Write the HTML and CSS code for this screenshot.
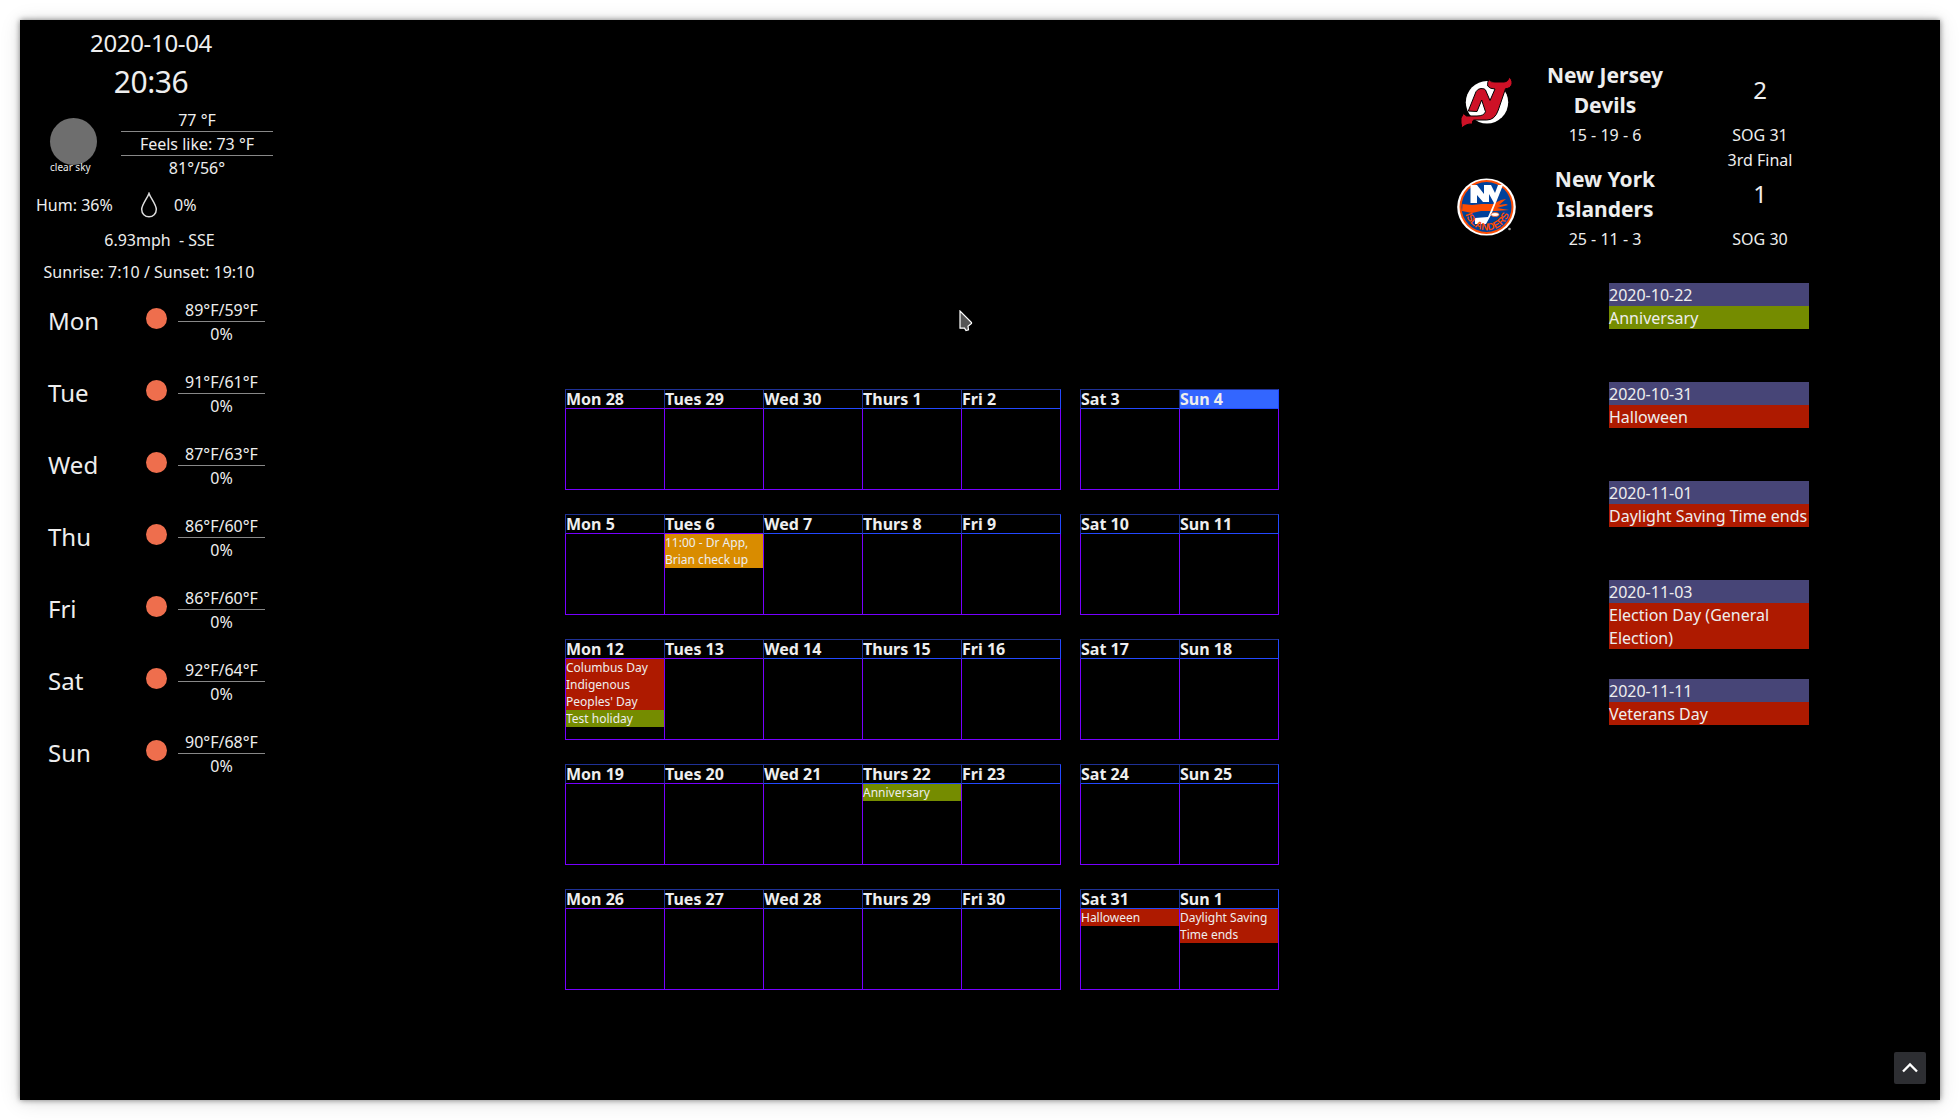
FILE: index.html
```html
<!DOCTYPE html>
<html lang="en">
<head>
<meta charset="utf-8">
<title>Dashboard</title>
<link rel="stylesheet" href="styles.css">
</head>
<body>
<main class="panel">
  <section class="weather">
    <div class="date">2020-10-04</div>
    <div class="time">20:36</div>
    <div class="current">
      <div class="sky"><span class="moon"></span><span class="sky-text">clear sky</span></div>
      <div class="temps"><div>77 °F</div><div>Feels like: 73 °F</div><div>81°/56°</div></div>
    </div>
    <div class="humidity">
      <span class="hum">Hum: 36%</span>
      <svg class="drop" width="18" height="26" viewBox="0 0 18 26"><path d="M9 1.5C7.5 6 1.7 12.500 1.700 17.500a7.300 7.300 0 0 0 14.600 0C16.300 12.500 10.500 6 9 1.500Z" fill="none" stroke="#ddd" stroke-width="1.500"/></svg>
      <span>0%</span>
    </div>
    <div class="wind">6.93mph&nbsp; - SSE</div>
    <div class="sun">Sunrise: 7:10 / Sunset: 19:10</div>
    <div class="forecast">
      <div class="fday"><span class="fname">Mon</span><span class="dot"></span><div class="fvals"><div>89°F/59°F</div><div>0%</div></div></div>
      <div class="fday"><span class="fname">Tue</span><span class="dot"></span><div class="fvals"><div>91°F/61°F</div><div>0%</div></div></div>
      <div class="fday"><span class="fname">Wed</span><span class="dot"></span><div class="fvals"><div>87°F/63°F</div><div>0%</div></div></div>
      <div class="fday"><span class="fname">Thu</span><span class="dot"></span><div class="fvals"><div>86°F/60°F</div><div>0%</div></div></div>
      <div class="fday"><span class="fname">Fri</span><span class="dot"></span><div class="fvals"><div>86°F/60°F</div><div>0%</div></div></div>
      <div class="fday"><span class="fname">Sat</span><span class="dot"></span><div class="fvals"><div>92°F/64°F</div><div>0%</div></div></div>
      <div class="fday"><span class="fname">Sun</span><span class="dot"></span><div class="fvals"><div>90°F/68°F</div><div>0%</div></div></div>
    </div>
  </section>

  <section class="calendar">
    <div class="week">
      <div class="days weekdays">
        <div class="day"><h3>Mon 28</h3></div><div class="day"><h3>Tues 29</h3></div><div class="day"><h3>Wed 30</h3></div><div class="day"><h3>Thurs 1</h3></div><div class="day"><h3>Fri 2</h3></div>
      </div>
      <div class="days">
        <div class="day"><h3>Sat 3</h3></div><div class="day today"><h3>Sun 4</h3></div>
      </div>
    </div>
    <div class="week">
      <div class="days weekdays">
        <div class="day"><h3>Mon 5</h3></div><div class="day"><h3>Tues 6</h3><p class="orange">11:00 - Dr App, Brian check up</p></div><div class="day"><h3>Wed 7</h3></div><div class="day"><h3>Thurs 8</h3></div><div class="day"><h3>Fri 9</h3></div>
      </div>
      <div class="days">
        <div class="day"><h3>Sat 10</h3></div><div class="day"><h3>Sun 11</h3></div>
      </div>
    </div>
    <div class="week">
      <div class="days weekdays">
        <div class="day"><h3>Mon 12</h3><p class="red">Columbus Day</p><p class="red">Indigenous Peoples' Day</p><p class="green">Test holiday</p></div><div class="day"><h3>Tues 13</h3></div><div class="day"><h3>Wed 14</h3></div><div class="day"><h3>Thurs 15</h3></div><div class="day"><h3>Fri 16</h3></div>
      </div>
      <div class="days">
        <div class="day"><h3>Sat 17</h3></div><div class="day"><h3>Sun 18</h3></div>
      </div>
    </div>
    <div class="week">
      <div class="days weekdays">
        <div class="day"><h3>Mon 19</h3></div><div class="day"><h3>Tues 20</h3></div><div class="day"><h3>Wed 21</h3></div><div class="day"><h3>Thurs 22</h3><p class="green">Anniversary</p></div><div class="day"><h3>Fri 23</h3></div>
      </div>
      <div class="days">
        <div class="day"><h3>Sat 24</h3></div><div class="day"><h3>Sun 25</h3></div>
      </div>
    </div>
    <div class="week">
      <div class="days weekdays">
        <div class="day"><h3>Mon 26</h3></div><div class="day"><h3>Tues 27</h3></div><div class="day"><h3>Wed 28</h3></div><div class="day"><h3>Thurs 29</h3></div><div class="day"><h3>Fri 30</h3></div>
      </div>
      <div class="days">
        <div class="day"><h3>Sat 31</h3><p class="red">Halloween</p></div><div class="day"><h3>Sun 1</h3><p class="red">Daylight Saving Time ends</p></div>
      </div>
    </div>
  </section>

  <section class="side">
    <div class="game">
      <div class="logos">
        <svg width="60" height="60" viewBox="0 0 60 60">
          <circle cx="30" cy="30.300" r="21.200" fill="#fff"/>
          <path d="M11.300 39L19 19.700Q21 16.500 24 16.500Q28 16.500 28.500 18L33 28.500L38 17Q33 17 30.700 14Q30 10 32 7.500Q33.500 10.500 38 10H47Q52 9.500 51.500 5Q55.500 7 55 12Q53.500 16.500 48.500 16.700L41.300 38Q38 48 29.700 48H18Q15 47.500 15.500 52Q9 51.500 5 56Q3.500 51 4 46L6.500 41.500L9.500 44H20Q27 44 28.500 39.700L24.700 28L20 39.500Z" fill="#ce1126" stroke="#000" stroke-width="1"/>
        </svg>
        <svg width="60" height="60" viewBox="0 0 60 60">
          <defs><path id="crest-arc" d="M7.300 34A23 23 0 0 0 52.700 34"/></defs>
          <ellipse cx="29.500" cy="30" rx="29.300" ry="28.600" fill="#fff"/>
          <circle cx="29.500" cy="30" r="27" fill="#fc4c02"/>
          <circle cx="29.500" cy="30" r="25" fill="#00419b"/>
          <path d="M5.500 27L15 28L25 27H36L44 23L49 22L42 28L49 27L51 28L40 31L52 33L38 34L24 34L15 36L5 34Z" fill="#fc4c02"/>
          <path d="M13.500 26V8H20L27 17V8H34L38 16L41 8H46L34 38L29 47H18V41L31 40L37 26L32 17V25H26L20 18V26Z" fill="#fff"/>
          <ellipse cx="38" cy="37.500" rx="4" ry="2" fill="#fff" stroke="#fc4c02" stroke-width=".7"/>
          <text class="crest"><textPath href="#crest-arc" startOffset="50%" text-anchor="middle">ISLANDERS</textPath></text>
          <circle cx="52.500" cy="52" r="1.300" fill="#999"/>
        </svg>
      </div>
      <div class="teams">
        <div class="team"><h2>New Jersey<br>Devils</h2><div>15 - 19 - 6</div></div>
        <div class="team"><h2>New York<br>Islanders</h2><div>25 - 11 - 3</div></div>
      </div>
      <div class="scores">
        <div class="score">2</div><div class="sog">SOG 31</div>
        <div class="period">3rd Final</div>
        <div class="score">1</div><div class="sog">SOG 30</div>
      </div>
    </div>
    <div class="upcoming">
      <div class="event"><div class="slate">2020-10-22</div><div class="green">Anniversary</div></div>
      <div class="event"><div class="slate">2020-10-31</div><div class="red">Halloween</div></div>
      <div class="event"><div class="slate">2020-11-01</div><div class="red">Daylight Saving Time ends</div></div>
      <div class="event"><div class="slate">2020-11-03</div><div class="red two-line">Election Day (General Election)</div></div>
      <div class="event"><div class="slate">2020-11-11</div><div class="red">Veterans Day</div></div>
    </div>
  </section>
  <svg class="cursor" width="14" height="22" viewBox="0 0 14 22"><path d="M1 1V18.200H5.500L7 20.500L9.500 19.800L9 16.300L12.500 13.500V12.500Z" fill="#555" stroke="#fff" stroke-width="1.200"/></svg>
  <button class="top" aria-label="Up"><svg width="32" height="32" viewBox="0 0 32 32"><path d="M9 19.500L16 12.500L23 19.500" fill="none" stroke="#fff" stroke-width="2.300"/></svg></button>
</main>
</body>
</html>
```
FILE: styles.css
```css
* { box-sizing: border-box; }
body {
  margin: 0;
  padding: 20px;
  height: 1120px;
  overflow: hidden;
  background: #fff;
  color: #eee;
  font: 16px/23px "Noto Sans", sans-serif;
}
h2, h3, p { margin: 0; }
.panel {
  position: relative;
  display: flex;
  height: 1080px;
  background: #000;
  box-shadow: 0 0 6px rgba(0,0,0,.5), 0 2px 20px rgba(0,0,0,.12);
}
.weather { width: 264px; padding-top: 6px; }
.date { padding-right: 2px; font-size: 24px; line-height: 33px; letter-spacing: -.35px; text-align: center; }
.time { margin-top: 2px; padding-right: 2px; font-size: 30px; line-height: 41px; letter-spacing: -.4px; text-align: center; }
.current { display: flex; margin-top: 6px; padding-left: 30px; height: 72px; }
.sky { width: 71px; padding-top: 10px; font-size: 10px; }
.moon { display: block; width: 47px; height: 47px; border-radius: 50%; background: #6e6e6e; }
.sky-text { display: block; margin-top: -5px; line-height: 14px; }
.temps { width: 152px; text-align: center; }
.temps div, .fvals div { height: 24px; padding-top: 1px; border-bottom: 1px solid #888; }
.temps div:last-child, .fvals div:last-child { border-bottom: 0; }
.humidity { display: flex; margin-top: 12px; padding-left: 16px; height: 26px; }
.humidity span { line-height: 27px; }
.hum { width: 104px; }
.drop { margin-right: 16px; }
.wind { margin-top: 11px; padding-left: 15px; text-align: center; }
.sun { margin: 9px 6px 0 0; text-align: center; }
.forecast { margin-top: 14px; }
.fday { display: flex; height: 72px; padding-left: 28px; }
.fname { width: 98px; padding-top: 6px; font-size: 24px; line-height: 33px; }
.dot { width: 21.400px; height: 21.400px; margin: 10px 10.600px 0 0; border-radius: 50%; background: #ee6e4d; }
.fvals { width: 87px; text-align: center; }
.calendar { width: 714px; margin: 369px 0 0 281px; }
.week { display: flex; gap: 19px; height: 125px; }
.days { display: flex; height: 101px; }
.day { width: 99px; border: 1px solid #70f; border-width: 0 0 1px 1px; font-size: 12px; line-height: 17px; }
.day:last-child { width: 100px; border-right-width: 1px; }
.day h3 {
  height: 20px;
  margin-left: -1px;
  border: 1px solid #1f3196;
  border-width: 1px 0 1px 1px;
  border-bottom-color: #2348ff;
  font-size: 16px;
  line-height: 18px;
}
.day:last-child h3 { margin-right: -1px; border-right: 1px solid #2348ff; }
.weekdays .day:nth-child(-n+2) h3 { border-bottom-color: #70f; }
.today h3 { background: #36f; }
.orange { background: #d98c00; }
.red { background: #ae1a00; }
.green { background: #758c00; }
.slate { background: #474577; }
.side { margin-left: 161px; width: 403px; padding-top: 40px; }
.game { display: flex; height: 223px; text-align: center; }
.logos { display: flex; flex-direction: column; gap: 45px; width: 93px; padding: 12px 0 0 17px; }
.crest { fill: #fc4c02; font: bold 10px "Liberation Sans", sans-serif; }
.teams { width: 144px; }
.team { height: 104px; }
.team h2 { font-size: 21px; line-height: 30px; }
.team div { margin-top: 4px; }
.scores { width: 166px; padding-top: 13px; }
.score { font-size: 24px; line-height: 33px; }
.sog { margin-top: 18px; }
.period { margin: 2px 0 5px; }
.upcoming { width: 200px; margin-left: 169px; }
.event { height: 99px; }
.event div { height: 23px; padding-top: 1px; }
.event .two-line { height: 46px; }
.cursor { position: absolute; left: 939px; top: 290px; }
.top { position: absolute; right: 14px; bottom: 16px; width: 32px; height: 32px; padding: 0; border: 0; border-radius: 2px; background: #2d2e32; }
.top svg { display: block; }
```
